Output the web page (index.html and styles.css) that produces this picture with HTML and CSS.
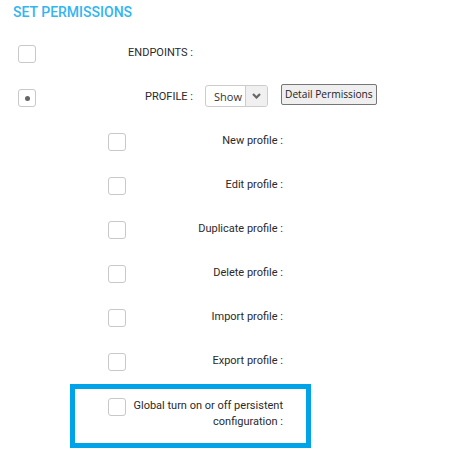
FILE: index.html
```html
<!DOCTYPE html>
<html lang="en">
<head>
  <meta charset="UTF-8" />
  <meta name="viewport" content="width=device-width, initial-scale=1.0"/>
  <title>Set Permissions</title>
  <link rel="stylesheet" href="styles.css">
</head>
<body>

  <h2 class="title">SET PERMISSIONS</h2>

  <div class="perm-list">
    <div class="row">
      <span class="check"></span>
      <span class="label">ENDPOINTS :</span>
    </div>

    <div class="row">
      <span class="check partial"></span>
      <span class="label">PROFILE :</span>
      <div class="select">
        <span class="select-value">Show</span>
        <span class="select-arrow">
          <svg width="9" height="6" viewBox="0 0 9 6"><path d="M1 1 L4.5 4.5 L8 1" fill="none" stroke="#666" stroke-width="2.2"/></svg>
        </span>
      </div>
      <button class="detail-btn">Detail Permissions</button>
    </div>

    <div class="row sub">
      <span class="check"></span>
      <span class="label">New profile :</span>
    </div>
    <div class="row sub">
      <span class="check"></span>
      <span class="label">Edit profile :</span>
    </div>
    <div class="row sub">
      <span class="check"></span>
      <span class="label">Duplicate profile :</span>
    </div>
    <div class="row sub">
      <span class="check"></span>
      <span class="label">Delete profile :</span>
    </div>
    <div class="row sub">
      <span class="check"></span>
      <span class="label">Import profile :</span>
    </div>
    <div class="row sub">
      <span class="check"></span>
      <span class="label">Export profile :</span>
    </div>

    <!-- highlighted row -->
    <div class="row global">
      <span class="check"></span>
      <span class="label">Global turn on or off persistent configuration :</span>
    </div>
  </div>

</body>
</html>
```

FILE: styles.css
```css
body {
  font-family: Roboto, "Liberation Sans", sans-serif;
  background: #fff;
  color: #333;
  margin: 0;
  padding: 0;
}
.title {
  margin: 0;
  padding: 4px 0 0 13px;
  height: 28px;
  font-size: 14px;
  font-weight: 500;
  color: #33b5f0;
}
.perm-list {
  display: flex;
  flex-direction: column;
}
.row {
  display: flex;
  align-items: center;
  height: 44px;
  padding-left: 18px;
  font-size: 11px;
}
.row.sub {
  padding-left: 108px;
}
.check {
  flex: none;
  width: 16px;
  height: 16px;
  border: 1px solid #c8c8c8;
  border-radius: 3px;
  background: #fff;
  display: flex;
  align-items: center;
  justify-content: center;
}
.check.partial::after {
  content: "";
  width: 5px;
  height: 5px;
  border-radius: 50%;
  background: #666;
}
.label {
  width: 157px;
  padding-bottom: 3px;
  text-align: right;
  color: #2a2a2a;
}
.select {
  display: flex;
  align-items: stretch;
  margin-left: 12px;
  margin-bottom: 4px;
  width: 61px;
  height: 20px;
  border: 1px solid #ccc;
  border-radius: 3px;
  overflow: hidden;
}
.select-value {
  flex: 1;
  display: flex;
  align-items: center;
  justify-content: flex-end;
  padding-right: 3px;
  font-family: "Open Sans", sans-serif;
  font-size: 11px;
  color: #333;
}
.select-arrow {
  width: 21px;
  background: #f0f0f0;
  border-left: 1px solid #ccc;
  display: flex;
  align-items: center;
  justify-content: center;
}
.detail-btn {
  margin-left: 13px;
  margin-bottom: 8px;
  height: 21px;
  padding: 0 3px;
  font-family: "Open Sans", sans-serif;
  font-size: 10.2px;
  color: #222;
  background: #efefef;
  border: 1px solid #767676;
  border-radius: 2px;
}
.row.global {
  align-items: flex-start;
  height: auto;
  width: 198px;
  margin-left: 70px;
  padding: 9px 0 13px 33px;
  border: 5px solid #00a3e8;
}
.row.global .label {
  width: 150px;
  margin-left: 7px;
  padding-bottom: 0;
  line-height: 16px;
}
```
